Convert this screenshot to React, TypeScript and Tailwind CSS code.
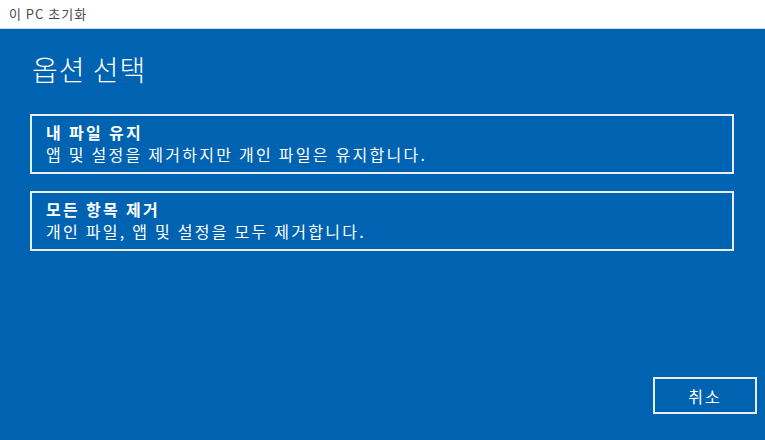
export default function App() {
  const font = { fontFamily: '"Noto Sans CJK KR", "Noto Sans", sans-serif' };
  return (
    <div className="w-[765px] h-[440px] flex flex-col bg-[#0063b1] overflow-hidden" style={font}>
      <div className="h-[29px] bg-white flex items-center pl-[9px] text-[13px] tracking-[1px] text-[#4a4a4a] border-b border-[#c9d6e6]">
        이 PC 초기화
      </div>
      <div className="flex-1 flex flex-col px-[30px] text-white">
        <h1 className="mt-[21px] ml-[2px] text-[28px] font-light leading-[38px] tracking-[1px]">옵션 선택</h1>
        <div className="mt-[26px] flex flex-col gap-[17px] w-[704px]">
          <div className="h-[60px] border-2 border-[#e8eef6] px-[14px] pt-[5px] flex flex-col">
            <span className="text-[16px] font-bold leading-[22px] tracking-[2.3px]">내 파일 유지</span>
            <span className="text-[16px] leading-[22px] tracking-[2.25px]">앱 및 설정을 제거하지만 개인 파일은 유지합니다.</span>
          </div>
          <div className="h-[60px] border-2 border-[#e8eef6] px-[14px] pt-[5px] flex flex-col">
            <span className="text-[16px] font-bold leading-[22px] tracking-[2.3px]">모든 항목 제거</span>
            <span className="text-[16px] leading-[22px] tracking-[2.25px]">개인 파일, 앱 및 설정을 모두 제거합니다.</span>
          </div>
        </div>
        <div className="flex-1" />
        <div className="flex justify-end mb-[26px] mr-[-22px]">
          <button className="w-[104px] h-[37px] border-2 border-[#e8eef6] text-[16px] tracking-[2px] text-white flex items-center justify-center">
            취소
          </button>
        </div>
      </div>
    </div>
  );
}
